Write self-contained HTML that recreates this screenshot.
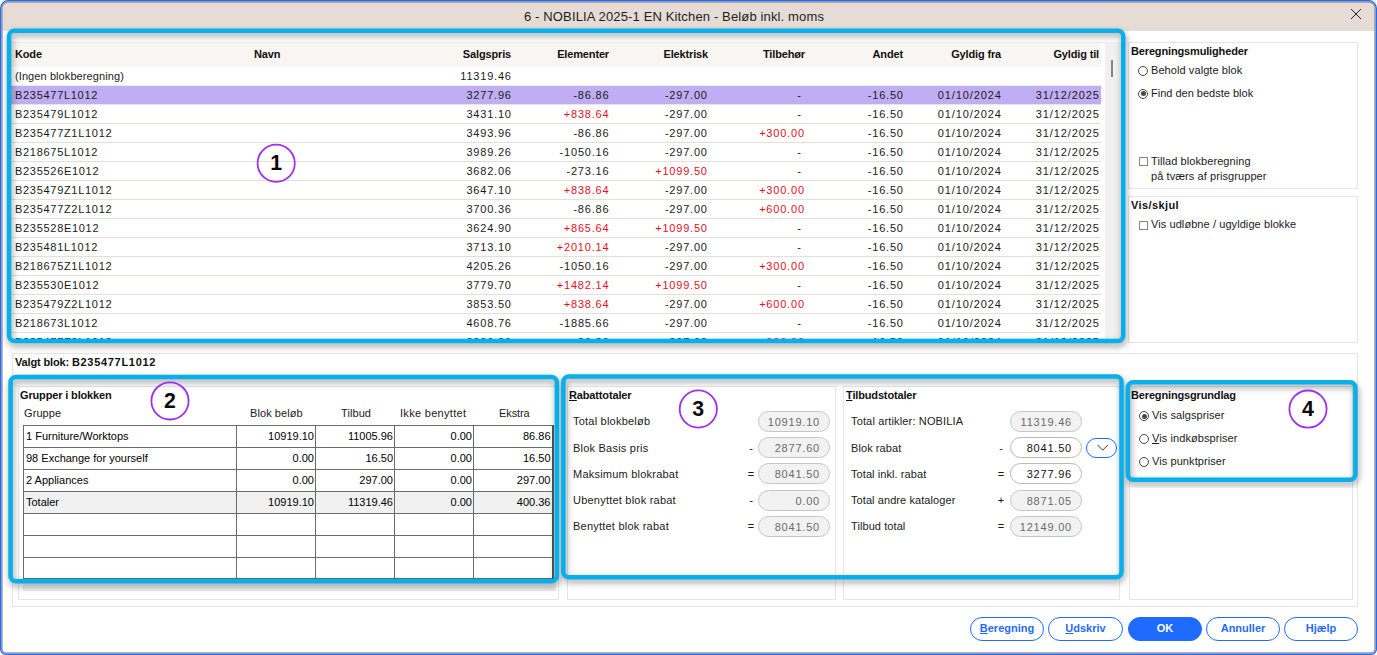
<!DOCTYPE html>
<html><head><meta charset="utf-8"><title>Blokberegning</title>
<style>
*{box-sizing:border-box;margin:0;padding:0}
html,body{width:1377px;height:655px;overflow:hidden}
body{background:#fff;font-family:"Liberation Sans",sans-serif;font-size:11px;color:#1a1a1a;position:relative}
.abs{position:absolute}
#win{position:absolute;left:0;top:0;width:1377px;height:655px;background:#fff;border-radius:8px 8px 5px 5px;overflow:hidden}
#win2{position:absolute;left:2px;top:2px;right:2px;bottom:2px;background:#fff;border-radius:6px 6px 3px 3px;overflow:hidden}
#title{position:absolute;left:0;top:0;width:100%;padding-right:29px;height:28.5px;background:#e6dcd5;text-align:center;font-size:13px;line-height:30px;color:#1e1e1e;letter-spacing:.14px}
#close{position:absolute;left:1348px;top:6px;width:12px;height:12px}
/* list */
#list{position:absolute;left:11px;top:42px;width:1090px;height:297px;overflow:hidden;background:#fff}
.thead{position:absolute;left:0;top:0;width:1090px;height:25px;background:#f9f5f2}
.hc{position:absolute;top:0;line-height:25px;font-weight:bold;font-size:11px;letter-spacing:-.15px;white-space:nowrap;color:#111}
.r{text-align:right}
.tr{position:absolute;left:0;width:1090px;height:19px;border-bottom:1px solid #e8ded8}
.tr.first{border-bottom-color:#f3ece6}
.tr.sel{background:#c0aef5;border-bottom-color:#efe4dc}
.c{position:absolute;top:0;line-height:19px;white-space:nowrap;font-size:11px;letter-spacing:.8px;margin-right:-.8px}
.c.dash{margin-right:2.4px}.c.code{letter-spacing:.7px}.c.txt{letter-spacing:.09px}.c.date{letter-spacing:.9px;margin-right:-.9px}
.red{color:#e60f1e}
.hl{position:absolute;border:4.4px solid #05b0ef;border-radius:9px;box-shadow:0 0 5px rgba(0,0,0,.45), inset 0 0 5px rgba(0,0,0,.42);pointer-events:none}
.gb{position:absolute;border:1px solid #e6e6e6;background:#fff}
.gt{margin-top:1px;position:absolute;font-weight:bold;font-size:11px;letter-spacing:-.15px;white-space:nowrap;color:#111}
.lbl{margin-top:1px;position:absolute;white-space:nowrap;font-size:11px;letter-spacing:.08px}
.radio{position:absolute;width:10px;height:10px;border:1px solid #444;border-radius:50%;background:#fff}
.radio.on::after{content:"";position:absolute;left:1.5px;top:1.5px;width:5px;height:5px;border-radius:50%;background:#4a4a4a}
.chk{position:absolute;width:9px;height:9px;border:1px solid #858585;background:#fff}
.num{position:absolute;width:39px;height:39px;border:1.7px solid #a030ee;border-radius:50%;text-align:center;font-weight:bold;font-size:20.5px;line-height:36px;color:#0a0a0a}
.pill{position:absolute;height:21px;width:72px;border:1px solid #c6c6c6;border-radius:11px;background:#f2f2f2;color:#6a6a6a;text-align:right;padding-right:9px;line-height:20px;font-size:11px;letter-spacing:.8px}
.pill.w{background:#fff;color:#111;border-color:#b9b9b9}
.op{margin-top:1px;position:absolute;width:12px;text-align:center;font-size:11px}
.btn{position:absolute;top:617px;height:24px;border:1px solid #1f6bff;border-radius:12px;background:#fff;color:#1f6bff;font-weight:bold;font-size:11px;text-align:center;line-height:21px}
.btn.ok{background:#1f6bff;color:#fff}
u{text-decoration:underline}
/* grid */
#grid{position:absolute;left:23px;top:425px;table-layout:fixed;border-collapse:collapse;color:#000;font-family:"Liberation Sans",sans-serif;font-size:11px}
#grid td{border:1px solid #6b6b6b;height:22px;padding:0 1px 2px 2px;white-space:nowrap;background:#fff}
#grid tr:last-child td{height:21px}
#grid td:last-child{border-right:2px solid #555}
#grid td.n{text-align:right}
#grid tr.tot td{background:#f1f1f1}
</style></head><body>
<div id="win"><div id="win2">
 <div id="title">6 - NOBILIA 2025-1 EN Kitchen - Beløb inkl. moms</div>
 <svg id="close" viewBox="0 0 12 12"><path d="M1 1L11 11M11 1L1 11" stroke="#2a1a2a" stroke-width="1" fill="none"/></svg>
</div></div>

<div id="list">
<div class="thead">
<span class="hc" style="left:4px">Kode</span><span class="hc" style="left:243px">Navn</span>
<span class="hc r" style="right:590px">Salgspris</span>
<span class="hc r" style="right:492px">Elementer</span>
<span class="hc r" style="right:393px">Elektrisk</span>
<span class="hc r" style="right:296px">Tilbehør</span>
<span class="hc r" style="right:198px">Andet</span>
<span class="hc r" style="right:100px">Gyldig fra</span>
<span class="hc r" style="right:2px">Gyldig til</span>
</div>
<div class="tr first" style="top:25px">
<span class="c txt" style="left:4px">(Ingen blokberegning)</span>
<span class="c r" style="right:590px">11319.46</span>
</div>
<div class="tr sel" style="top:44px">
<span class="c code" style="left:4px">B235477L1012</span>
<span class="c r" style="right:590px">3277.96</span>
<span class="c r" style="right:492.4px">-86.86</span>
<span class="c r" style="right:394px">-297.00</span>
<span class="c r dash" style="right:297px">-</span>
<span class="c r" style="right:198px">-16.50</span>
<span class="c r date" style="right:100px">01/10/2024</span>
<span class="c r date" style="right:2px">31/12/2025</span>
</div>
<div class="tr" style="top:63px">
<span class="c code" style="left:4px">B235479L1012</span>
<span class="c r" style="right:590px">3431.10</span>
<span class="c r red" style="right:492.4px">+838.64</span>
<span class="c r" style="right:394px">-297.00</span>
<span class="c r dash" style="right:297px">-</span>
<span class="c r" style="right:198px">-16.50</span>
<span class="c r date" style="right:100px">01/10/2024</span>
<span class="c r date" style="right:2px">31/12/2025</span>
</div>
<div class="tr" style="top:82px">
<span class="c code" style="left:4px">B235477Z1L1012</span>
<span class="c r" style="right:590px">3493.96</span>
<span class="c r" style="right:492.4px">-86.86</span>
<span class="c r" style="right:394px">-297.00</span>
<span class="c r red" style="right:297px">+300.00</span>
<span class="c r" style="right:198px">-16.50</span>
<span class="c r date" style="right:100px">01/10/2024</span>
<span class="c r date" style="right:2px">31/12/2025</span>
</div>
<div class="tr" style="top:101px">
<span class="c code" style="left:4px">B218675L1012</span>
<span class="c r" style="right:590px">3989.26</span>
<span class="c r" style="right:492.4px">-1050.16</span>
<span class="c r" style="right:394px">-297.00</span>
<span class="c r dash" style="right:297px">-</span>
<span class="c r" style="right:198px">-16.50</span>
<span class="c r date" style="right:100px">01/10/2024</span>
<span class="c r date" style="right:2px">31/12/2025</span>
</div>
<div class="tr" style="top:120px">
<span class="c code" style="left:4px">B235526E1012</span>
<span class="c r" style="right:590px">3682.06</span>
<span class="c r" style="right:492.4px">-273.16</span>
<span class="c r red" style="right:394px">+1099.50</span>
<span class="c r dash" style="right:297px">-</span>
<span class="c r" style="right:198px">-16.50</span>
<span class="c r date" style="right:100px">01/10/2024</span>
<span class="c r date" style="right:2px">31/12/2025</span>
</div>
<div class="tr" style="top:139px">
<span class="c code" style="left:4px">B235479Z1L1012</span>
<span class="c r" style="right:590px">3647.10</span>
<span class="c r red" style="right:492.4px">+838.64</span>
<span class="c r" style="right:394px">-297.00</span>
<span class="c r red" style="right:297px">+300.00</span>
<span class="c r" style="right:198px">-16.50</span>
<span class="c r date" style="right:100px">01/10/2024</span>
<span class="c r date" style="right:2px">31/12/2025</span>
</div>
<div class="tr" style="top:158px">
<span class="c code" style="left:4px">B235477Z2L1012</span>
<span class="c r" style="right:590px">3700.36</span>
<span class="c r" style="right:492.4px">-86.86</span>
<span class="c r" style="right:394px">-297.00</span>
<span class="c r red" style="right:297px">+600.00</span>
<span class="c r" style="right:198px">-16.50</span>
<span class="c r date" style="right:100px">01/10/2024</span>
<span class="c r date" style="right:2px">31/12/2025</span>
</div>
<div class="tr" style="top:177px">
<span class="c code" style="left:4px">B235528E1012</span>
<span class="c r" style="right:590px">3624.90</span>
<span class="c r red" style="right:492.4px">+865.64</span>
<span class="c r red" style="right:394px">+1099.50</span>
<span class="c r dash" style="right:297px">-</span>
<span class="c r" style="right:198px">-16.50</span>
<span class="c r date" style="right:100px">01/10/2024</span>
<span class="c r date" style="right:2px">31/12/2025</span>
</div>
<div class="tr" style="top:196px">
<span class="c code" style="left:4px">B235481L1012</span>
<span class="c r" style="right:590px">3713.10</span>
<span class="c r red" style="right:492.4px">+2010.14</span>
<span class="c r" style="right:394px">-297.00</span>
<span class="c r dash" style="right:297px">-</span>
<span class="c r" style="right:198px">-16.50</span>
<span class="c r date" style="right:100px">01/10/2024</span>
<span class="c r date" style="right:2px">31/12/2025</span>
</div>
<div class="tr" style="top:215px">
<span class="c code" style="left:4px">B218675Z1L1012</span>
<span class="c r" style="right:590px">4205.26</span>
<span class="c r" style="right:492.4px">-1050.16</span>
<span class="c r" style="right:394px">-297.00</span>
<span class="c r red" style="right:297px">+300.00</span>
<span class="c r" style="right:198px">-16.50</span>
<span class="c r date" style="right:100px">01/10/2024</span>
<span class="c r date" style="right:2px">31/12/2025</span>
</div>
<div class="tr" style="top:234px">
<span class="c code" style="left:4px">B235530E1012</span>
<span class="c r" style="right:590px">3779.70</span>
<span class="c r red" style="right:492.4px">+1482.14</span>
<span class="c r red" style="right:394px">+1099.50</span>
<span class="c r dash" style="right:297px">-</span>
<span class="c r" style="right:198px">-16.50</span>
<span class="c r date" style="right:100px">01/10/2024</span>
<span class="c r date" style="right:2px">31/12/2025</span>
</div>
<div class="tr" style="top:253px">
<span class="c code" style="left:4px">B235479Z2L1012</span>
<span class="c r" style="right:590px">3853.50</span>
<span class="c r red" style="right:492.4px">+838.64</span>
<span class="c r" style="right:394px">-297.00</span>
<span class="c r red" style="right:297px">+600.00</span>
<span class="c r" style="right:198px">-16.50</span>
<span class="c r date" style="right:100px">01/10/2024</span>
<span class="c r date" style="right:2px">31/12/2025</span>
</div>
<div class="tr" style="top:272px">
<span class="c code" style="left:4px">B218673L1012</span>
<span class="c r" style="right:590px">4608.76</span>
<span class="c r" style="right:492.4px">-1885.66</span>
<span class="c r" style="right:394px">-297.00</span>
<span class="c r dash" style="right:297px">-</span>
<span class="c r" style="right:198px">-16.50</span>
<span class="c r date" style="right:100px">01/10/2024</span>
<span class="c r date" style="right:2px">31/12/2025</span>
</div>
<div class="tr" style="top:291px">
<span class="c code" style="left:4px">B235477Z3L1012</span>
<span class="c r" style="right:590px">3906.86</span>
<span class="c r" style="right:492.4px">-86.86</span>
<span class="c r" style="right:394px">-297.00</span>
<span class="c r red" style="right:297px">+900.00</span>
<span class="c r" style="right:198px">-16.50</span>
<span class="c r date" style="right:100px">01/10/2024</span>
<span class="c r date" style="right:2px">31/12/2025</span>
</div>
</div>
<div class="abs" style="left:11px;top:42px;width:1110px;height:1px;background:#ebebeb"></div>
<!-- scrollbar -->
<div class="abs" style="left:1104.5px;top:42px;width:17px;height:298px;background:#f0f0f0"></div>
<div class="abs" style="left:1111px;top:60px;width:2px;height:17px;background:#878787"></div>

<!-- right panel -->
<div class="gb" style="left:1128px;top:42px;width:230px;height:147px"></div>
<div class="gt" style="left:1131px;top:44px">Beregningsmuligheder</div>
<div class="radio" style="left:1138px;top:65.6px"></div><div class="lbl" style="left:1151px;top:63px">Behold valgte blok</div>
<div class="radio on" style="left:1138px;top:88.6px"></div><div class="lbl" style="left:1151px;top:86px;letter-spacing:0">Find den bedste blok</div>
<div class="chk" style="left:1139px;top:157px"></div><div class="lbl" style="left:1151px;top:154px">Tillad blokberegning</div>
<div class="lbl" style="left:1151px;top:169px">på tværs af prisgrupper</div>

<div class="gb" style="left:1128px;top:196px;width:230px;height:147px"></div>
<div class="gt" style="left:1131px;top:198px;letter-spacing:.4px">Vis/skjul</div>
<div class="chk" style="left:1139px;top:220.5px"></div><div class="lbl" style="left:1151px;top:217px">Vis udløbne / ugyldige blokke</div>

<!-- lower panel -->
<div class="gb" style="left:12px;top:353px;width:1346px;height:254px"></div>
<div class="gt" style="left:15px;top:355px">Valgt blok: <span style="letter-spacing:.7px">B235477L1012</span></div>

<div class="gb" style="left:17.5px;top:386px;width:541px;height:213.5px"></div>
<div class="gt" style="left:20px;top:388px">Grupper i blokken</div>
<div class="lbl" style="left:24px;top:406px">Gruppe</div>
<div class="lbl" style="left:250px;top:406px">Blok beløb</div>
<div class="lbl" style="left:341px;top:406px">Tilbud</div>
<div class="lbl" style="left:400px;top:406px;letter-spacing:.3px">Ikke benyttet</div>
<div class="lbl" style="left:499px;top:406px;letter-spacing:-.1px">Ekstra</div>
<div class="abs" style="left:23px;top:425px;width:533px;height:165.5px;background:#ececec"></div>
<table id="grid">
<colgroup><col style="width:213px"><col style="width:79px"><col style="width:79px"><col style="width:79px"><col style="width:79px"></colgroup>
<tr><td>1 Furniture/Worktops</td><td class="n">10919.10</td><td class="n">11005.96</td><td class="n">0.00</td><td class="n">86.86</td></tr>
<tr><td>98 Exchange for yourself</td><td class="n">0.00</td><td class="n">16.50</td><td class="n">0.00</td><td class="n">16.50</td></tr>
<tr><td>2 Appliances</td><td class="n">0.00</td><td class="n">297.00</td><td class="n">0.00</td><td class="n">297.00</td></tr>
<tr class="tot"><td>Totaler</td><td class="n">10919.10</td><td class="n">11319.46</td><td class="n">0.00</td><td class="n">400.36</td></tr>
<tr><td></td><td></td><td></td><td></td><td></td></tr>
<tr><td></td><td></td><td></td><td></td><td></td></tr>
<tr><td></td><td></td><td></td><td></td><td></td></tr>
</table>

<div class="gb" style="left:566.5px;top:386px;width:269.5px;height:213.5px"></div>
<div class="gt" style="left:569px;top:388px"><u>R</u>abattotaler</div>
<div class="lbl" style="left:573px;top:414px;letter-spacing:.22px">Total blokbeløb</div>
<div class="lbl" style="left:573px;top:441px;letter-spacing:.22px">Blok Basis pris</div>
<div class="lbl" style="left:573px;top:467px;letter-spacing:.22px">Maksimum blokrabat</div>
<div class="lbl" style="left:573px;top:493px;letter-spacing:.22px">Ubenyttet blok rabat</div>
<div class="lbl" style="left:573px;top:519px;letter-spacing:.22px">Benyttet blok rabat</div>
<div class="op" style="left:745px;top:441px">-</div>
<div class="op" style="left:745px;top:467px">=</div>
<div class="op" style="left:745px;top:493px">-</div>
<div class="op" style="left:745px;top:519px">=</div>
<div class="pill" style="left:758px;top:411px">10919.10</div>
<div class="pill" style="left:758px;top:437px">2877.60</div>
<div class="pill" style="left:758px;top:463px">8041.50</div>
<div class="pill" style="left:758px;top:490px">0.00</div>
<div class="pill" style="left:758px;top:516px">8041.50</div>

<div class="gb" style="left:843px;top:386px;width:277px;height:213.5px"></div>
<div class="gt" style="left:846px;top:388px"><u>T</u>ilbudstotaler</div>
<div class="lbl" style="left:851px;top:414px;letter-spacing:.15px">Total artikler: NOBILIA</div>
<div class="lbl" style="left:851px;top:441px">Blok rabat</div>
<div class="lbl" style="left:851px;top:467px">Total inkl. rabat</div>
<div class="lbl" style="left:851px;top:493px">Total andre kataloger</div>
<div class="lbl" style="left:851px;top:519px">Tilbud total</div>
<div class="op" style="left:995px;top:441px">-</div>
<div class="op" style="left:995px;top:467px">=</div>
<div class="op" style="left:995px;top:493px">+</div>
<div class="op" style="left:995px;top:519px">=</div>
<div class="pill" style="left:1010px;top:411px">11319.46</div>
<div class="pill w" style="left:1010px;top:437px">8041.50</div>
<div class="pill w" style="left:1010px;top:463px">3277.96</div>
<div class="pill" style="left:1010px;top:490px">8871.05</div>
<div class="pill" style="left:1010px;top:516px">12149.00</div>
<div class="abs" style="left:1086px;top:438px;width:31px;height:20px;border:1px solid #1f6bff;border-radius:10px;background:#fff"></div>
<svg class="abs" style="left:1096px;top:443px" width="14" height="10" viewBox="0 0 14 10"><path d="M1.6 2L6.7 7.2L11.8 2" stroke="#3a3a3a" stroke-width="1" fill="none"/></svg>

<div class="gb" style="left:1128.5px;top:386px;width:224.5px;height:213.5px"></div>
<div class="gt" style="left:1131px;top:388px">Beregningsgrundlag</div>
<div class="radio on" style="left:1139px;top:411px"></div><div class="lbl" style="left:1152px;top:408px">Vis salgspriser</div>
<div class="radio" style="left:1139px;top:434px"></div><div class="lbl" style="left:1152px;top:431px"><u>V</u>is indkøbspriser</div>
<div class="radio" style="left:1139px;top:457px"></div><div class="lbl" style="left:1152px;top:454px">Vis punktpriser</div>

<!-- buttons -->
<div class="btn" style="left:970px;width:74px"><u>B</u>eregning</div>
<div class="btn" style="left:1048px;width:75px"><u>U</u>dskriv</div>
<div class="btn ok" style="left:1128px;width:74px">OK</div>
<div class="btn" style="left:1206px;width:74px">Annuller</div>
<div class="btn" style="left:1284px;width:74px">Hjælp</div>

<!-- highlights -->
<svg class="abs" style="left:0;top:0;pointer-events:none" width="1377" height="655" viewBox="0 0 1377 655" font-family="Liberation Sans, sans-serif">
<defs><filter id="sh" x="-5%" y="-5%" width="110%" height="110%"><feGaussianBlur stdDeviation="3"/></filter></defs>
<rect x="10.05" y="33.85" width="1114.20" height="310.40" rx="5.5" fill="none" stroke="#000" stroke-opacity=".36" stroke-width="5.0" filter="url(#sh)"/>
<rect x="11.55" y="380.15" width="546.30" height="204.20" rx="5.5" fill="none" stroke="#000" stroke-opacity=".36" stroke-width="5.0" filter="url(#sh)"/>
<rect x="564.35" y="379.75" width="558.20" height="200.70" rx="5.5" fill="none" stroke="#000" stroke-opacity=".36" stroke-width="5.0" filter="url(#sh)"/>
<rect x="1128.85" y="385.55" width="227.50" height="97.40" rx="5.5" fill="none" stroke="#000" stroke-opacity=".36" stroke-width="5.0" filter="url(#sh)"/>
<rect x="9.05" y="30.65" width="1114.20" height="310.40" rx="5.5" fill="none" stroke="#05b0ec" stroke-width="4.5"/>
<rect x="10.55" y="376.95" width="546.30" height="204.20" rx="5.5" fill="none" stroke="#05b0ec" stroke-width="4.5"/>
<rect x="563.35" y="376.55" width="558.20" height="200.70" rx="5.5" fill="none" stroke="#05b0ec" stroke-width="4.5"/>
<rect x="1127.85" y="382.35" width="227.50" height="97.40" rx="5.5" fill="none" stroke="#05b0ec" stroke-width="4.5"/>
<circle cx="276.2" cy="163.2" r="18.6" fill="none" stroke="#a030ee" stroke-width="1.8"/>
<text x="276.2" y="170.1" text-anchor="middle" font-size="21.3" font-weight="bold" fill="#0a0a0a">1</text>
<circle cx="170.0" cy="400.9" r="18.6" fill="none" stroke="#a030ee" stroke-width="1.8"/>
<text x="170.0" y="407.8" text-anchor="middle" font-size="21.3" font-weight="bold" fill="#0a0a0a">2</text>
<circle cx="698.3" cy="409.0" r="18.6" fill="none" stroke="#a030ee" stroke-width="1.8"/>
<text x="698.3" y="415.9" text-anchor="middle" font-size="21.3" font-weight="bold" fill="#0a0a0a">3</text>
<circle cx="1308.0" cy="409.1" r="18.6" fill="none" stroke="#a030ee" stroke-width="1.8"/>
<text x="1308.0" y="416.0" text-anchor="middle" font-size="21.3" font-weight="bold" fill="#0a0a0a">4</text>
<path d="M8.0 2.0H1369.0A6 6 0 0 1 1375.0 8.0V649.5A3.5 3.5 0 0 1 1371.5 653.0H5.5A3.5 3.5 0 0 1 2.0 649.5V8.0A6 6 0 0 1 8.0 2.0Z" fill="none" stroke="#9a948c" stroke-width="1.4"/>
<path d="M8.15 0.65H1368.85A7.5 7.5 0 0 1 1376.35 8.15V649.35A5 5 0 0 1 1371.35 654.35H5.65A5 5 0 0 1 0.65 649.35V8.15A7.5 7.5 0 0 1 8.15 0.65Z" fill="none" stroke="#1f6bff" stroke-width="1.3"/>
</svg>
</body></html>
